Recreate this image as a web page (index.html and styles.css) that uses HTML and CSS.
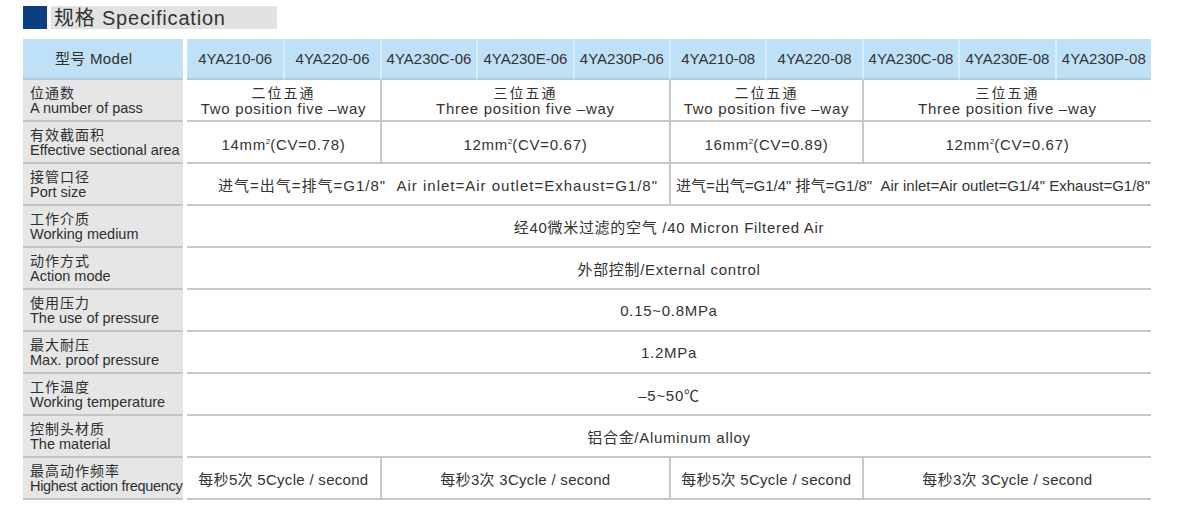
FILE: index.html
```html
<!DOCTYPE html>
<html lang="zh">
<head>
<meta charset="utf-8">
<title>规格 Specification</title>
<link rel="stylesheet" href="styles.css">
</head>
<body>
<div class="page">
  <div class="title">
    <span class="title-mark"></span>
    <h1 class="title-bar">规格 Specification</h1>
  </div>

  <div class="table">
    <div class="row head">
      <div class="label head-label">型号 Model</div>
      <div class="cells">
        <div class="hc">4YA210-06</div>
        <div class="hc">4YA220-06</div>
        <div class="hc">4YA230C-06</div>
        <div class="hc">4YA230E-06</div>
        <div class="hc">4YA230P-06</div>
        <div class="hc">4YA210-08</div>
        <div class="hc">4YA220-08</div>
        <div class="hc">4YA230C-08</div>
        <div class="hc">4YA230E-08</div>
        <div class="hc">4YA230P-08</div>
      </div>
    </div>

    <div class="row">
      <div class="label"><span class="cn">位通数</span><span class="en">A number of pass</span></div>
      <div class="cells">
        <div class="c s2 two"><span class="cn2">二位五通</span><span>Two position five –way</span></div>
        <div class="c s3 two"><span class="cn2">三位五通</span><span>Three position five –way</span></div>
        <div class="c s2 two"><span class="cn2">二位五通</span><span>Two position five –way</span></div>
        <div class="c s3 two"><span class="cn2">三位五通</span><span>Three position five –way</span></div>
      </div>
    </div>

    <div class="row">
      <div class="label"><span class="cn">有效截面积</span><span class="en">Effective sectional area</span></div>
      <div class="cells">
        <div class="c s2 area"><span>14mm<sup>2</sup>(CV=0.78)</span></div>
        <div class="c s3 area"><span>12mm<sup>2</sup>(CV=0.67)</span></div>
        <div class="c s2 area"><span>16mm<sup>2</sup>(CV=0.89)</span></div>
        <div class="c s3 area"><span>12mm<sup>2</sup>(CV=0.67)</span></div>
      </div>
    </div>

    <div class="row">
      <div class="label"><span class="cn">接管口径</span><span class="en">Port size</span></div>
      <div class="cells">
        <div class="c s5 port-a">进气=出气=排气=G1/8"&nbsp;&nbsp;Air inlet=Air outlet=Exhaust=G1/8"</div>
        <div class="c s5 port-b">进气=出气=G1/4" 排气=G1/8"&nbsp;&nbsp;Air inlet=Air outlet=G1/4" Exhaust=G1/8"</div>
      </div>
    </div>

    <div class="row">
      <div class="label"><span class="cn">工作介质</span><span class="en">Working medium</span></div>
      <div class="cells">
        <div class="c s10">经40微米过滤的空气 /40 Micron Filtered Air</div>
      </div>
    </div>

    <div class="row">
      <div class="label"><span class="cn">动作方式</span><span class="en">Action mode</span></div>
      <div class="cells">
        <div class="c s10">外部控制/External control</div>
      </div>
    </div>

    <div class="row">
      <div class="label"><span class="cn">使用压力</span><span class="en">The use of pressure</span></div>
      <div class="cells">
        <div class="c s10">0.15~0.8MPa</div>
      </div>
    </div>

    <div class="row">
      <div class="label"><span class="cn">最大耐压</span><span class="en">Max. proof pressure</span></div>
      <div class="cells">
        <div class="c s10">1.2MPa</div>
      </div>
    </div>

    <div class="row">
      <div class="label"><span class="cn">工作温度</span><span class="en">Working temperature</span></div>
      <div class="cells">
        <div class="c s10">–5~50℃</div>
      </div>
    </div>

    <div class="row">
      <div class="label"><span class="cn">控制头材质</span><span class="en">The material</span></div>
      <div class="cells">
        <div class="c s10">铝合金/Aluminum alloy</div>
      </div>
    </div>

    <div class="row">
      <div class="label"><span class="cn">最高动作频率</span><span class="en tight">Highest action frequency</span></div>
      <div class="cells">
        <div class="c s2 freq">每秒5次 5Cycle / second</div>
        <div class="c s3 freq">每秒3次 3Cycle / second</div>
        <div class="c s2 freq">每秒5次 5Cycle / second</div>
        <div class="c s3 freq">每秒3次 3Cycle / second</div>
      </div>
    </div>
  </div>
</div>
</body>
</html>
```

FILE: styles.css
```css
* { box-sizing: border-box; }

html, body {
  margin: 0;
  padding: 0;
  background: #ffffff;
}

body {
  font-family: "Liberation Sans", "Noto Sans CJK SC", Arial, sans-serif;
  color: #333333;
}

.page {
  padding: 6px 0 0 23px;
}

.title {
  display: flex;
  align-items: stretch;
  height: 23px;
  gap: 4px;
}

.title-mark {
  width: 24px;
  background: #0b3f80;
}

.title-bar {
  margin: 0;
  width: 226px;
  background: #e2e2e2;
  font-weight: normal;
  font-size: 20px;
  letter-spacing: 0.8px;
  line-height: 24px;
  padding-left: 3px;
  color: #333;
  white-space: nowrap;
}

.table {
  margin-top: 10px;
  width: 1128px;
}

.row {
  display: flex;
  height: 42px;
}

.row.head {
  height: 41px;
}

.label {
  width: 160px;
  flex: none;
  margin-right: 4px;
  background: #e6e6e6;
  border-bottom: 2px solid #c4c4c4;
  display: flex;
  flex-direction: column;
  justify-content: center;
  padding: 2px 0 0 7px;
  font-size: 14.5px;
  line-height: 15px;
  white-space: nowrap;
  color: #2f2f2f;
}

.label .cn {
  font-size: 14px;
  letter-spacing: 1px;
}

.label .tight {
  letter-spacing: -0.3px;
}

.head-label {
  background: #bfe1f7;
  border-bottom: 2px solid #b4c9d6;
  font-size: 15px;
  padding: 0 0 0 32px;
  letter-spacing: 0.3px;
}

.cells {
  width: 964px;
  flex: none;
  display: grid;
  grid-template-columns: repeat(10, 1fr);
}

.hc {
  background: #bfe1f7;
  border-bottom: 2px solid #b4c9d6;
  border-left: 2px solid #d8eefb;
  display: flex;
  align-items: center;
  justify-content: center;
  font-size: 15px;
  white-space: nowrap;
  color: #333;
}

.hc:first-child {
  border-left: none;
}

.c {
  border-bottom: 2px solid #c8c8c8;
  border-left: 2px solid #c8c8c8;
  display: flex;
  flex-direction: column;
  align-items: center;
  justify-content: center;
  padding-top: 1px;
  font-size: 15px;
  letter-spacing: 0.7px;
  white-space: nowrap;
  color: #333;
}

.c:first-child {
  border-left: none;
}

.c sup {
  font-size: 8px;
  line-height: 0;
  vertical-align: 6px;
  letter-spacing: 0;
}

.two {
  line-height: 15px;
  padding-top: 2px;
}

.two .cn2 {
  font-size: 14px;
  letter-spacing: 2px;
}

.area {
  padding-top: 4px;
}

.port-a {
  letter-spacing: 1px;
  padding-left: 20px;
  padding-top: 0;
}

.port-b {
  letter-spacing: 0;
  padding-left: 4px;
  padding-top: 0;
}

.freq {
  letter-spacing: 0.3px;
  padding-top: 0;
}

.s2 { grid-column: span 2; }
.s3 { grid-column: span 3; }
.s5 { grid-column: span 5; }
.s10 { grid-column: span 10; }
```
